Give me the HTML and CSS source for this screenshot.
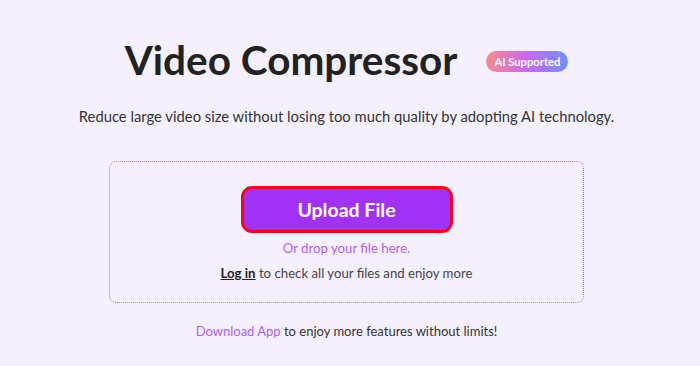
FILE: index.html
```html
<!DOCTYPE html>
<html>
<head>
<meta charset="utf-8">
<link rel="stylesheet" href="styles.css">
</head>
<body>
<main class="page">
  <div class="head">
    <h1 class="title">Video Compressor</h1>
    <span class="badge">AI Supported</span>
  </div>
  <p class="sub">Reduce large video size without losing too much quality by adopting AI technology.</p>
  <div class="drop">
    <button class="upload">Upload File</button>
    <p class="hint">Or drop your file here.</p>
    <p class="login"><a class="login-link">Log in</a> to check all your files and enjoy more</p>
  </div>
  <p class="foot"><a class="dl">Download App</a> to enjoy more features without limits!</p>
</main>
</body>
</html>
```
FILE: styles.css
```css
html, body {
  margin: 0;
  padding: 0;
  background: #f5f0fd;
}
body {
  width: 700px;
  height: 366px;
  overflow: hidden;
  font-family: "Lato", "Noto Sans", sans-serif;
  color: #333;
}
.page {
  display: flex;
  flex-direction: column;
  align-items: center;
  padding-top: 34px;
  padding-right: 7px;
}
.head {
  display: flex;
  align-items: center;
  gap: 29px;
  height: 52px;
}
.title {
  margin: 0;
  font-size: 40.5px;
  font-weight: 700;
  color: #222;
  line-height: 52px;
}
.badge {
  display: inline-block;
  height: 21px;
  line-height: 21px;
  padding: 0 8px;
  border-radius: 11px;
  font-size: 11.2px;
  font-weight: 700;
  color: #fff;
  background: linear-gradient(90deg, #f98b8b 0%, #c868f2 50%, #6f90fb 100%);
  margin-top: 2px;
}
.sub {
  margin: 20px 0 0;
  font-size: 14.8px;
  line-height: 20px;
  color: #333;
}
.drop {
  margin-top: 35px;
  width: 473px;
  height: 140px;
  border: 1px dotted #b46ef0;
  border-radius: 7px;
  display: flex;
  flex-direction: column;
  align-items: center;
}
.upload {
  margin-top: 24px;
  width: 212px;
  height: 47px;
  border: 3px solid #ff0016;
  border-radius: 11px;
  background: #a231f6;
  color: #fff;
  font-family: inherit;
  font-size: 19.5px;
  font-weight: 700;
  padding: 0;
}
.hint {
  margin: 6px 0 0;
  font-size: 13.2px;
  line-height: 18px;
  color: #b25ef0;
}
.login {
  margin: 7px 0 0;
  font-size: 13.2px;
  line-height: 18px;
  color: #444;
}
.login-link {
  color: #222;
  font-weight: 700;
  text-decoration: underline;
}
.foot {
  margin: 19px 0 0;
  font-size: 13px;
  line-height: 18px;
  color: #333;
}
.dl {
  color: #b25ef0;
}
```
